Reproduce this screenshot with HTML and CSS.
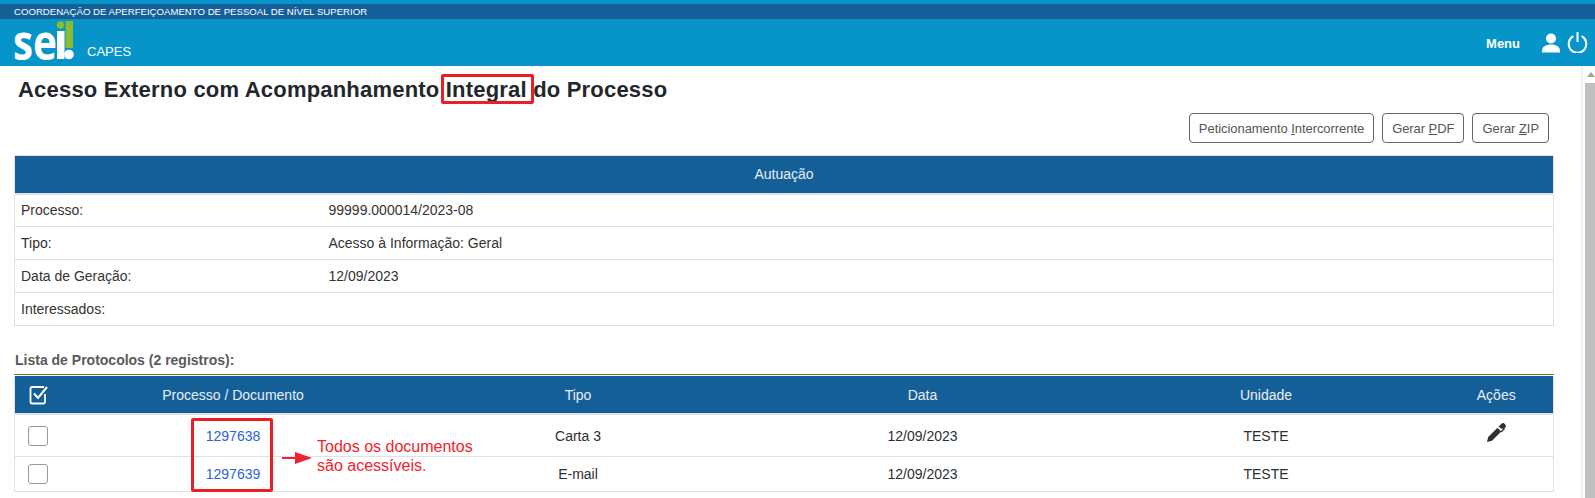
FILE: index.html
```html
<!DOCTYPE html>
<html lang="pt-BR">
<head>
<meta charset="utf-8">
<title>SEI - Acesso Externo</title>
<link rel="stylesheet" href="styles.css">
</head>
<body>
<div class="page">
  <header class="top">
    <div class="gov-bar">COORDENAÇÃO DE APERFEIÇOAMENTO DE PESSOAL DE NÍVEL SUPERIOR</div>
    <div class="brand-bar">
      <div class="brand">
        <svg class="logo" width="62" height="40" viewBox="0 0 62 40" aria-label="sei!">
          <text class="logo-text" x="-1" y="39.500" textLength="44" lengthAdjust="spacingAndGlyphs">se</text>
          <rect x="43" y="11" width="7.500" height="28" fill="#fff"/>
          <circle cx="46.500" cy="5" r="3.800" fill="#8cbb2e"/>
          <rect x="51.500" y="1" width="7.500" height="27" fill="#8cbb2e"/>
          <circle cx="55" cy="34.500" r="4.800" fill="#fff"/>
        </svg>
        <span class="org">CAPES</span>
      </div>
      <nav class="tools">
        <span class="menu-label">Menu</span>
        <svg class="user-icon" width="20" height="20" viewBox="0 0 20 20"><circle cx="10" cy="5.500" r="5" fill="#fff"/><path d="M1 18.500c0-5 3.500-7 9-7s9 2 9 7v1H1z" fill="#fff"/></svg>
        <svg class="power-icon" width="21" height="21" viewBox="0 0 21 21"><path d="M6.300 4.200a8.800 8.800 0 1 0 8.400 0" fill="none" stroke="#fff" stroke-width="2"/><path d="M10.500 0v10" fill="none" stroke="#fff" stroke-width="2"/></svg>
      </nav>
    </div>
  </header>
  <div class="body-row">
    <main class="content">
      <h1 class="title">Acesso Externo com Acompanhamento Integral do Processo</h1>
      <span class="mark mark-title"></span>
      <div class="actions">
        <button class="btn" type="button">Peticionamento <u>I</u>ntercorrente</button>
        <button class="btn" type="button">Gerar <u>P</u>DF</button>
        <button class="btn" type="button">Gerar <u>Z</u>IP</button>
      </div>
      <table class="info">
        <colgroup><col class="info-label"><col></colgroup>
        <thead><tr><th colspan="2">Autuação</th></tr></thead>
        <tbody>
          <tr><td>Processo:</td><td>99999.000014/2023-08</td></tr>
          <tr><td>Tipo:</td><td>Acesso à Informação: Geral</td></tr>
          <tr><td>Data de Geração:</td><td>12/09/2023</td></tr>
          <tr><td>Interessados:</td><td></td></tr>
        </tbody>
      </table>
      <div class="list-label">Lista de Protocolos (2 registros):</div>
      <table class="docs">
        <colgroup><col class="c1"><col class="c2"><col class="c3"><col class="c4"><col class="c5"><col></colgroup>
        <thead>
          <tr>
            <th class="check-head"><svg width="20" height="20" viewBox="0 0 20 20"><path d="M16 9v8a1.500 1.500 0 0 1-1.500 1.500H3A1.500 1.500 0 0 1 1.500 17V3.500A1.500 1.500 0 0 1 3 2h12" fill="none" stroke="#fff" stroke-width="1.800"/><path d="M5 8.500l4 4.500 9-11" fill="none" stroke="#fff" stroke-width="2"/></svg></th>
            <th>Processo / Documento</th><th>Tipo</th><th>Data</th><th>Unidade</th><th>Ações</th>
          </tr>
        </thead>
        <tbody>
          <tr class="row-a">
            <td class="check"><span class="box"></span></td>
            <td><a class="doc-link" href="#">1297638</a></td><td>Carta 3</td><td>12/09/2023</td><td>TESTE</td>
            <td><svg class="pen" width="19" height="19" viewBox="0 0 19 19"><path d="M0 19l1.200-5L10.500 4.700l3.800 3.800L5 17.800z" fill="#2f3033"/><path d="M11.500 3.700l2.700-2.700a2.500 2.500 0 0 1 3.600 0l.2.200a2.500 2.500 0 0 1 0 3.600l-.6.600.6.600-3.500 3.500-.9-.9 2.600-2.600-.6-.6-.6.600z" fill="#2f3033"/></svg></td>
          </tr>
          <tr class="row-b">
            <td class="check"><span class="box"></span></td>
            <td><a class="doc-link" href="#">1297639</a></td><td>E-mail</td><td>12/09/2023</td><td>TESTE</td><td></td>
          </tr>
        </tbody>
      </table>
      <span class="mark mark-docs"></span>
      <svg class="arrow" width="30" height="12" viewBox="0 0 30 12"><path d="M0 5h13V0l17 6-17 6V7H0z" fill="#f2222c"/></svg>
      <p class="note">Todos os documentos<br>são acessíveis.</p>
    </main>
    <aside class="scrollbar">
      <span class="scroll-up"></span>
      <span class="scroll-thumb"></span>
    </aside>
  </div>
</div>
</body>
</html>
```
FILE: styles.css
```css
* { box-sizing: border-box; }
html, body { margin: 0; height: 100%; overflow: hidden; background: #fff; }
body { font-family: "Liberation Sans", Arial, sans-serif; font-size: 14px; color: #2b2f33; }
.page { height: 498px; display: flex; flex-direction: column; overflow: hidden; }

.top { height: 66px; padding-top: 4px; background: #0694c9; flex: none; }
.gov-bar { height: 15px; background: #155f99; color: #fff; font-size: 9.620px; line-height: 15px; padding-left: 14px; }
.brand-bar { height: 47px; display: flex; justify-content: space-between; }
.brand { display: flex; align-items: flex-end; padding-left: 14px; padding-bottom: 6px; }
.logo { display: block; overflow: visible; }
.logo-text { font-family: "Open Sans", sans-serif; font-weight: 700; font-size: 50px; fill: #fff; }
.org { color: #fff; font-size: 13px; line-height: 16px; margin-left: 11px; }
.tools { display: flex; align-items: center; padding-right: 7px; }
.menu-label { color: #fff; font-weight: 700; font-size: 13px; margin-right: 21px; position: relative; top: 1px; }
.user-icon { margin-right: 6px; }

.body-row { flex: 1; display: flex; min-height: 0; }
.content { position: relative; flex: 1; padding: 0 27px 0 14px; min-width: 0; }
.title { margin: 10px 0 0 4px; font-size: 22px; line-height: 28px; font-weight: 700; letter-spacing: 0.2px; color: #23272b; }
.actions { display: flex; justify-content: flex-end; gap: 8px; margin-top: 9px; padding-right: 5px; }
.btn { height: 30px; padding: 0 9px; background: #fff; border: 1px solid #666; border-radius: 4px; font: 13px "Liberation Sans", Arial, sans-serif; letter-spacing: -0.06px; color: #555; }

table { border-collapse: collapse; width: 100%; table-layout: fixed; }
th { background: #155f99; color: #e9eef3; font-weight: 400; border-bottom: 2px solid #dee2e6; }
td { border: 1px solid #dee2e6; border-width: 1px 0; }
.info { margin-top: 12px; border-left: 1px solid #dee2e6; border-right: 1px solid #dee2e6; }
.info-label { width: 308px; }
.info th { height: 38px; border-top: 1px solid #dee2e6; }
.info td { height: 33px; padding: 0 6px; color: #333; }

.list-label { margin-top: 27px; padding: 0 0 6px 1px; font-size: 14px; font-weight: 700; color: #5a5a5a; line-height: 15px; border-bottom: 1px solid #5a7d0a; }
.docs { margin-top: 1px; border-left: 1px solid #dee2e6; border-right: 1px solid #dee2e6; }
.c1 { width: 48px; }
.c2 { width: 341px; }
.c3 { width: 349px; }
.c4 { width: 340px; }
.c5 { width: 347px; }
.docs th { height: 38px; padding: 0; }
.docs td { text-align: center; padding: 0; }
.row-a td { height: 42px; padding-top: 2px; }
.row-b td { height: 35px; }
.check-head { text-align: left; }
.check-head svg { display: block; margin-left: 14px; }
.docs .check { text-align: left; }
.box { display: block; width: 20px; height: 20px; margin-left: 13px; border: 1px solid #999; border-radius: 3px; background: #fff; }
.doc-link { color: #2e62d9; text-decoration: none; }
.pen { display: block; margin: 0 auto 7px; }

.mark { position: absolute; border: 3px solid #ee1c25; border-radius: 2px; pointer-events: none; }
.mark-title { left: 441px; top: 8px; width: 93px; height: 30px; }
.mark-docs { left: 191px; top: 352px; width: 82px; height: 74px; }
.arrow { position: absolute; left: 282px; top: 386px; }
.note { position: absolute; left: 317px; top: 371px; margin: 0; font-size: 16px; line-height: 19px; color: #f2222c; }

.scrollbar { width: 14px; flex: none; padding-left: 2px; background: #fff; border-left: 2px solid #f1f1f1; display: flex; flex-direction: column; align-items: stretch; }
.scroll-up { height: 17px; position: relative; flex: none; }
.scroll-up::after { content: ""; position: absolute; left: 2px; top: 6px; border: 4px solid transparent; border-top-width: 0; border-bottom: 5px solid #a3a3a3; }
.scroll-thumb { flex: 1; background: #c0c0c0; }
```
